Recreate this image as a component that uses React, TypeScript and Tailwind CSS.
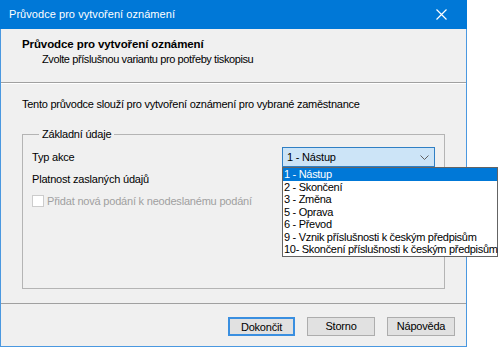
import { useState } from 'react'

const actions = [
  '1 - Nástup',
  '2 - Skončení',
  '3 - Změna',
  '5 - Oprava',
  '6 - Převod',
  '9 - Vznik příslušnosti k českým předpisům',
  '10- Skončení příslušnosti k českým předpisům',
]

export default function App() {
  const [selected, setSelected] = useState(0)

  return (
    <div className="w-[500px] h-[348px] bg-white font-['Liberation_Sans',Arial,sans-serif] text-[11px] tracking-[-0.2px] text-black">
      <div className="relative w-[467px] h-[347px] flex flex-col">
        {/* Title bar */}
        <div className="h-[29px] bg-[#0078d7] flex items-center justify-between pl-[9px] pr-[20px] text-white text-[11px] tracking-[0.05px]">
          <span>Průvodce pro vytvoření oznámení</span>
          <svg width="11" height="11" viewBox="0 0 11 11" className="stroke-white" strokeWidth="1.2">
            <path d="M0.5 0.5 L10.5 10.5 M10.5 0.5 L0.5 10.5" />
          </svg>
        </div>

        <div className="flex-1 flex flex-col bg-[#f0f0f0] border-x border-b border-[#4a98e0]">
          {/* Header */}
          <div className="h-[54px] pt-[7px] pl-[21px] border-b border-[#a0a0a0]">
            <p className="font-bold leading-[16px] text-[11.5px] tracking-[-0.1px]">Průvodce pro vytvoření oznámení</p>
            <p className="pl-[20px] leading-[15px] tracking-[-0.4px]">Zvolte příslušnou variantu pro potřeby tiskopisu</p>
          </div>

          {/* Body */}
          <div className="flex-1 flex flex-col border-t border-white px-[21px] pt-[12px]">
            <p className="leading-[16px] tracking-[-0.25px]">Tento průvodce slouží pro vytvoření oznámení pro vybrané zaměstnance</p>

            <fieldset className="mt-[15px] h-[162px] border border-[#b4b4b4] px-[9px]">
              <legend className="ml-[7px] px-[3px] leading-[14px]">Základní údaje</legend>
              <div className="flex items-center justify-between h-[20px] mt-[6px]">
                <span>Typ akce</span>
                <div className="relative w-[153px] h-[20px] bg-[#cce4f7] border border-[#2f7fc4] flex items-center justify-between pl-[4px] pr-[5px]">
                  <span>{actions[selected]}</span>
                  <svg width="9" height="5" viewBox="0 0 9 5" fill="none" className="stroke-[#606060]" strokeWidth="1">
                    <path d="M0.5 0.5 L4.5 4.5 L8.5 0.5" />
                  </svg>
                  <ul className="absolute left-[-1px] top-[19px] w-[216px] bg-white border border-[#646464] z-10 tracking-[-0.3px]">
                    {actions.map((a, i) => (
                      <li
                        key={a}
                        onClick={() => setSelected(i)}
                        className={`h-[12.5px] leading-[12.5px] pl-[1px] whitespace-nowrap ${
                          i === selected ? 'bg-[#0078d7] text-white' : ''
                        }`}
                      >
                        {a}
                      </li>
                    ))}
                  </ul>
                </div>
              </div>
              <p className="mt-[4px] leading-[16px]">Platnost zaslaných údajů</p>
              <label className="mt-[6px] flex items-center gap-[3px] text-[#a0a0a0]">
                <span className="w-[12px] h-[12px] bg-white border border-[#cccccc]" />
                <span>Přidat nová podání k neodeslanému podání</span>
              </label>
            </fieldset>
          </div>

          {/* Footer */}
          <div className="h-[43px] border-t border-[#a0a0a0] flex items-start justify-end gap-[12px] pt-[13px] pr-[11px]">
            <button className="w-[67px] h-[19px] bg-[#e1e1e1] border-2 border-[#3a8fe0]">Dokončit</button>
            <button className="w-[68px] h-[19px] bg-[#e1e1e1] border border-[#adadad]">Storno</button>
            <button className="w-[68px] h-[19px] bg-[#e1e1e1] border border-[#adadad]">Nápověda</button>
          </div>
        </div>
      </div>
    </div>
  )
}
